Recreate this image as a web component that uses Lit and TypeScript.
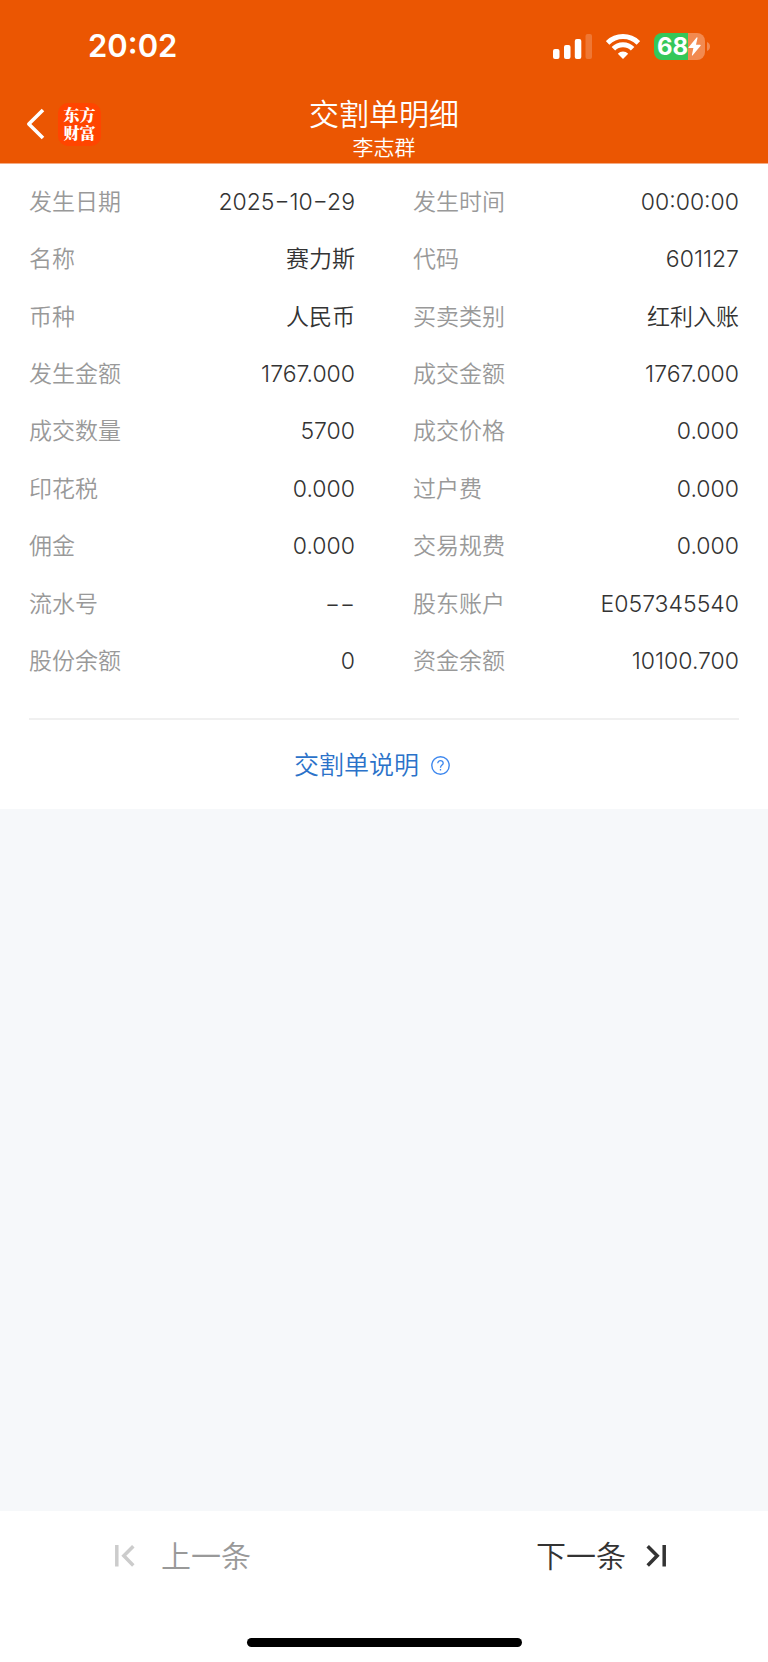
import { LitElement, html, css } from "lit";
import { customElement, property } from "lit/decorators.js";

interface Field {
  label: string;
  value: string;
}

const FIELDS: Field[] = [
  { label: "发生日期", value: "2025−10−29" },
  { label: "发生时间", value: "00:00:00" },
  { label: "名称", value: "赛力斯" },
  { label: "代码", value: "601127" },
  { label: "币种", value: "人民币" },
  { label: "买卖类别", value: "红利入账" },
  { label: "发生金额", value: "1767.000" },
  { label: "成交金额", value: "1767.000" },
  { label: "成交数量", value: "5700" },
  { label: "成交价格", value: "0.000" },
  { label: "印花税", value: "0.000" },
  { label: "过户费", value: "0.000" },
  { label: "佣金", value: "0.000" },
  { label: "交易规费", value: "0.000" },
  { label: "流水号", value: "−−" },
  { label: "股东账户", value: "E057345540" },
  { label: "股份余额", value: "0" },
  { label: "资金余额", value: "10100.700" },
];

@customElement("status-bar")
class StatusBar extends LitElement {
  static styles = css`
    :host {
      display: flex;
      align-items: center;
      justify-content: space-between;
      height: 91px;
      padding: 1px 58px 0 88px;
      box-sizing: border-box;
      color: #fff;
    }
    .time {
      font-size: 31px;
      line-height: 40px;
      font-weight: 600;
    }
    .icons {
      display: flex;
      align-items: center;
      gap: 14px;
    }
    .icons svg {
      display: block;
    }
    .battery {
      display: flex;
      align-items: center;
      gap: 2px;
    }
    .cell {
      display: flex;
      align-items: center;
      width: 51px;
      height: 27px;
      box-sizing: border-box;
      padding-left: 3px;
      border-radius: 8px;
      background: linear-gradient(to right, #34c759 34px, #f28a50 34px);
    }
    .level {
      font-size: 24px;
      line-height: 27px;
      font-weight: 700;
    }
  `;

  render() {
    return html`
      <span class="time">20:02</span>
      <div class="icons">
        <svg width="39" height="25" viewBox="0 0 39 25" fill="#fff" aria-hidden="true">
          <rect x="0" y="15" width="6.5" height="10" rx="2" />
          <rect x="11" y="11" width="6.5" height="14" rx="2" />
          <rect x="21.8" y="5" width="6.5" height="20" rx="2" />
          <rect x="32.5" y="0" width="6.5" height="25" rx="2" opacity=".2" />
        </svg>
        <svg width="34" height="25" viewBox="0 0 34 25" aria-hidden="true">
          <g fill="none" stroke="#fff" stroke-width="5">
            <path d="M1.6 8.9A22 22 0 0 1 32.4 8.9" />
            <path d="M7.4 14.8A13.6 13.6 0 0 1 26.6 14.8" />
          </g>
          <path fill="#fff" d="M17 25l-5.2-5.3a7.4 7.4 0 0 1 10.4 0z" />
        </svg>
        <div class="battery">
          <div class="cell">
            <span class="level">68</span>
            <svg width="13" height="19" viewBox="0 0 13 19" fill="#fff" aria-hidden="true">
              <path d="M8.6 .4L.6 10.2q-.6.9.5.9h4.3L3.9 18.1q0 1 .8.2L12.6 8.7q.5-.9-.5-.9H8L9.5 1Q9.5-.2 8.6.4z" />
            </svg>
          </div>
          <svg width="3" height="9" viewBox="0 0 3 9" fill="#f28a50" aria-hidden="true">
            <path d="M0 0Q3 1.4 3 4.5T0 9z" />
          </svg>
        </div>
      </div>
    `;
  }
}

@customElement("nav-header")
class NavHeader extends LitElement {
  @property() heading = "";
  @property() owner = "";

  static styles = css`
    :host {
      display: grid;
      grid-template-columns: 1fr auto 1fr;
      align-items: center;
      height: 72px;
      padding: 2px 26px 0;
      box-sizing: border-box;
      color: #fff;
    }
    .left {
      display: flex;
      align-items: center;
      gap: 13px;
      padding-bottom: 8px;
    }
    .back {
      display: block;
      padding: 0;
      border: 0;
      background: none;
      color: inherit;
    }
    .back svg {
      display: block;
    }
    .brand {
      display: block;
      width: 43px;
      height: 43px;
      box-sizing: border-box;
      padding: 3px 5px;
      border-radius: 10px;
      background: #ff4500;
      color: #fff;
      font-family: "Noto Serif CJK SC", "Noto Sans CJK SC", sans-serif;
      font-size: 16px;
      line-height: 18px;
      font-weight: 900;
      text-align: center;
      text-decoration: none;
    }
    .title {
      text-align: center;
    }
    h1 {
      margin: 0;
      font-size: 30px;
      line-height: 40px;
      font-weight: 350;
    }
    p {
      margin: 0;
      font-size: 21px;
      line-height: 28px;
    }
  `;

  render() {
    return html`
      <div class="left">
        <button class="back" type="button" aria-label="返回">
          <svg width="19" height="32" viewBox="0 0 19 32" fill="none" stroke="#fff" stroke-width="3.6">
            <path d="M17 2L2.8 16 17 30" stroke-linejoin="round" />
          </svg>
        </button>
        <a class="brand" href="#home">东方财富</a>
      </div>
      <div class="title">
        <h1>${this.heading}</h1>
        <p>${this.owner}</p>
      </div>
    `;
  }
}

@customElement("app-root")
class AppRoot extends LitElement {
  static styles = css`
    :host {
      display: flex;
      flex-direction: column;
      min-height: 100vh;
      background: #f6f8fa;
      color: #333;
      font-family: "Inter", "Noto Sans CJK SC", sans-serif;
      font-weight: 350;
    }
    .top {
      background: #eb5602;
      border-bottom: 1px solid #f4ab83;
    }
    .sheet {
      padding: 9px 29px 0;
      background: #fff;
    }
    .fields {
      display: grid;
      grid-template-columns: 1fr 1fr;
      grid-auto-rows: 1fr;
      column-gap: 58px;
      min-height: 517px;
      margin: 0 0 28px;
      font-size: 23px;
      line-height: 32px;
    }
    .field {
      display: flex;
      align-items: center;
      justify-content: space-between;
    }
    dt {
      color: #999;
    }
    dd {
      margin: 0;
    }
    .help {
      display: flex;
      justify-content: center;
      padding: 29px 24px 28px 0;
      border-top: 2px solid #f0f0f0;
    }
    .help a {
      display: flex;
      align-items: center;
      gap: 12px;
      color: #2b72c9;
      font-size: 25px;
      line-height: 32px;
      text-decoration: none;
    }
    .filler {
      flex: 1;
    }
    .bottom {
      background: #fff;
    }
    .pager {
      display: flex;
      justify-content: space-between;
      padding: 0 102px 0 115px;
    }
    .pager button {
      display: flex;
      align-items: center;
      height: 90px;
      padding: 0;
      border: 0;
      background: none;
      color: #333;
      font-family: inherit;
      font-size: 30px;
      font-weight: inherit;
      line-height: 40px;
      gap: 20px;
    }
    .pager .prev {
      color: #999;
      gap: 26px;
    }
    .home {
      display: flex;
      justify-content: center;
      padding: 37px 0 15px;
    }
    .indicator {
      width: 275px;
      height: 9px;
      border-radius: 5px;
      background: #000;
    }
  `;

  render() {
    return html`
      <header class="top">
        <status-bar></status-bar>
        <nav-header heading="交割单明细" owner="李志群"></nav-header>
      </header>
      <main class="sheet">
        <dl class="fields">
          ${FIELDS.map(
            (f) => html`<div class="field"><dt>${f.label}</dt><dd>${f.value}</dd></div>`
          )}
        </dl>
        <div class="help">
          <a href="#help">
            交割单说明
            <svg width="19" height="19" viewBox="0 0 19 19" fill="none" stroke="#3d87ee" aria-hidden="true">
              <circle cx="9.5" cy="9.5" r="8.7" stroke-width="1.4" />
              <path d="M6.8 7.3A2.7 2.7 0 0 1 12.2 7.2C12.2 9 9.5 9.3 9.5 11.7M9.5 12.9V14.4" stroke-width="1.3" />
            </svg>
          </a>
        </div>
      </main>
      <div class="filler"></div>
      <footer class="bottom">
        <nav class="pager">
          <button class="prev" type="button" disabled>
            <svg width="20" height="22" viewBox="0 0 20 22" fill="none" stroke="#ccc" stroke-width="3.5" aria-hidden="true">
              <path d="M1.8 0V21.5M18.3 1.2L8.8 10.8 18.3 20.4" />
            </svg>
            上一条
          </button>
          <button type="button">
            下一条
            <svg width="20" height="22" viewBox="0 0 20 22" fill="none" stroke="#333" stroke-width="3.5" aria-hidden="true">
              <path d="M18.2 0V21.5M1.7 1.2L11.2 10.8 1.7 20.4" />
            </svg>
          </button>
        </nav>
        <div class="home"><div class="indicator"></div></div>
      </footer>
    `;
  }
}
